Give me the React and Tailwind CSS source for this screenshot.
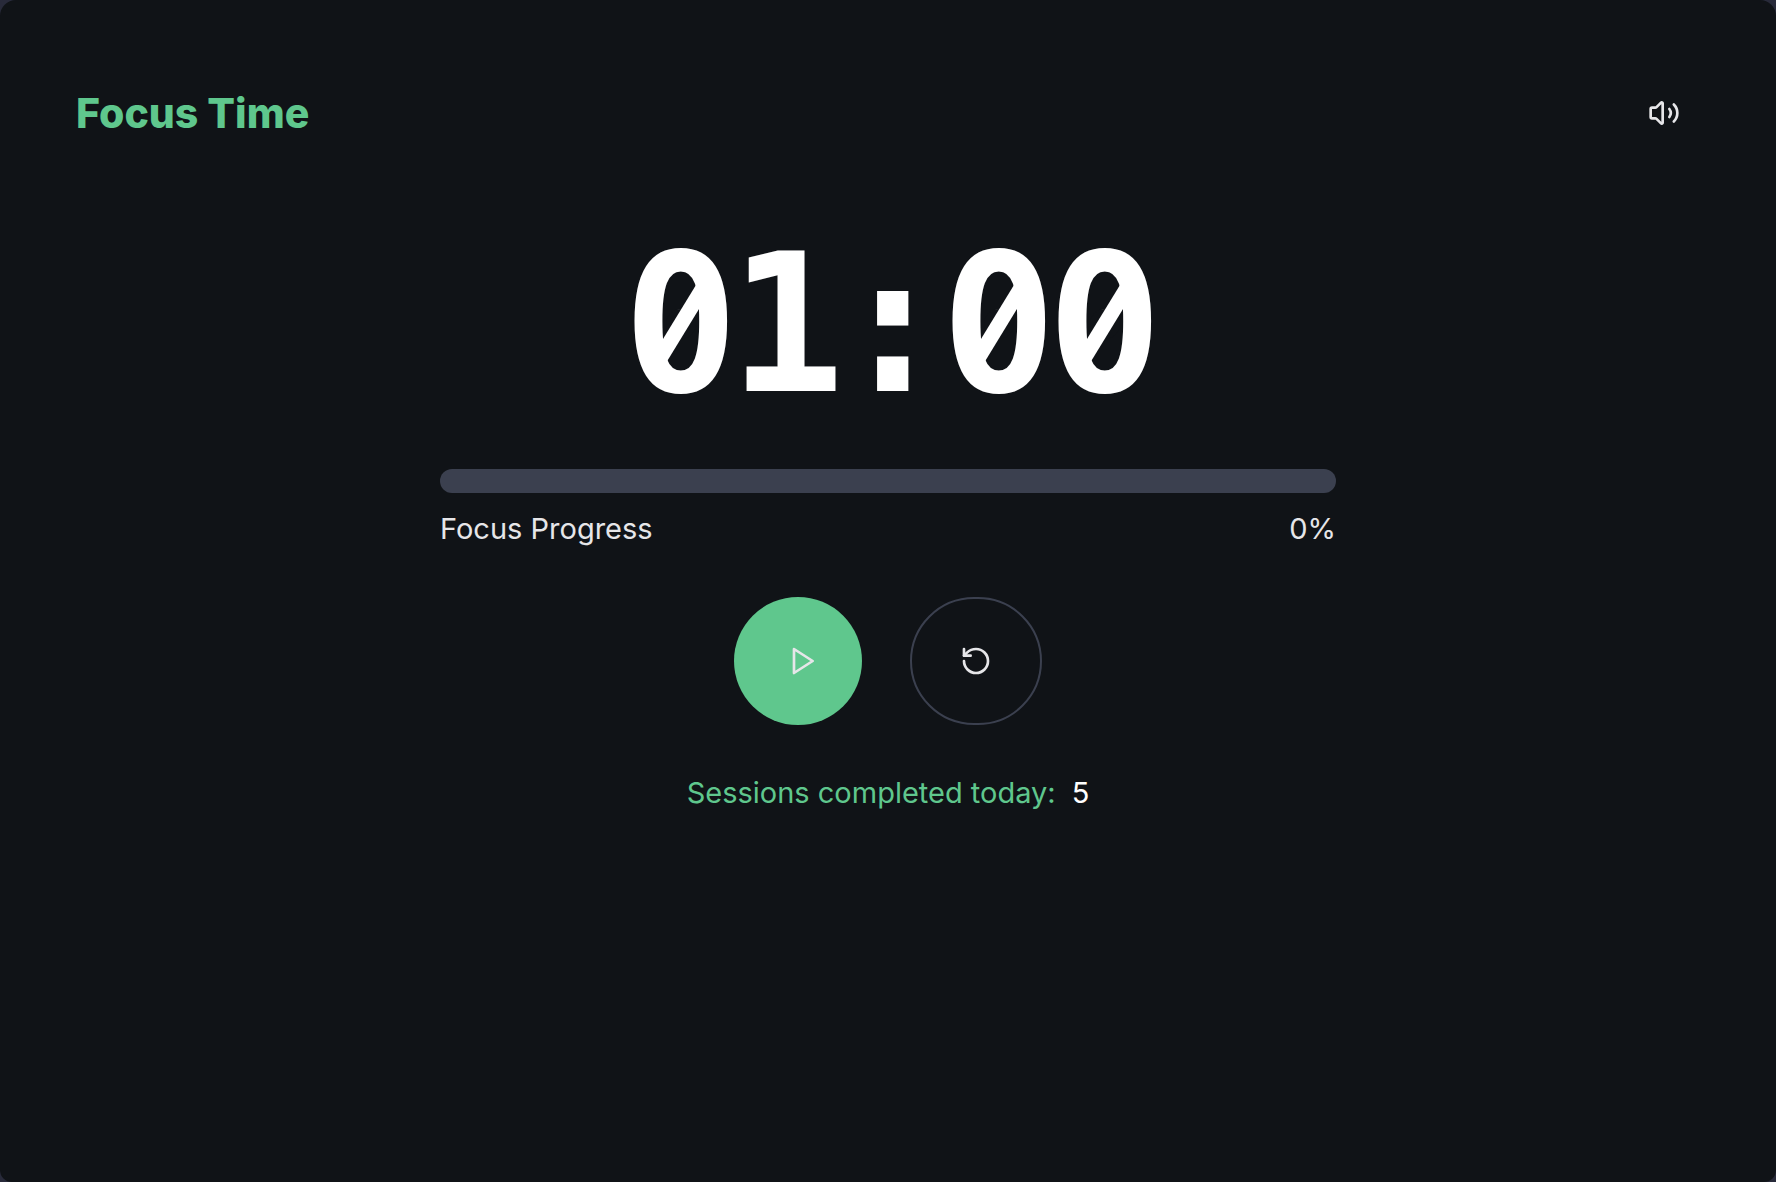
import { useState } from "react";

function Icon({ children, className = "" }) {
  return (
    <svg
      viewBox="0 0 24 24"
      aria-hidden="true"
      fill="none"
      stroke="currentColor"
      strokeWidth="2"
      strokeLinecap="round"
      strokeLinejoin="round"
      className={"size-8 " + className}
    >
      {children}
    </svg>
  );
}

// A zero whose centre dot is replaced by a diagonal bar.
function Zero() {
  return (
    <span className="relative inline-block">
      0
      <svg
        viewBox="-40 -50 80 100"
        aria-hidden="true"
        className="absolute top-[45px] left-[18px] h-[100px] w-20"
      >
        <circle r="15" className="fill-[#101317]" />
        <line x1="-22" y1="36" x2="22" y2="-36" stroke="currentColor" strokeWidth="15" />
      </svg>
    </span>
  );
}

export default function App() {
  const [progress] = useState(0);
  const time = "01:00";
  return (
    <div className="min-h-screen bg-[#282a3a] font-['Inter',sans-serif] text-[#e6e6e9]">
      <main className="flex min-h-screen flex-col rounded-t-2xl rounded-b-xl bg-[#101317] px-[76px] pt-[77px] pb-16">
        <header className="flex items-center justify-between">
          <h1 className="text-[41px] leading-[72px] font-extrabold text-[#5fc78d]">Focus Time</h1>
          <button type="button" aria-label="Mute sound" className="flex size-[72px] items-center justify-center rounded-xl">
            <Icon>
              <path d="M11 4.702a.705.705 0 0 0-1.203-.498L6.413 7.587A1.4 1.4 0 0 1 5.416 8H3a1 1 0 0 0-1 1v6a1 1 0 0 0 1 1h2.416a1.4 1.4 0 0 1 .997.413l3.383 3.384A.705.705 0 0 0 11 19.298z" />
              <path d="M16 9a5 5 0 0 1 0 6" />
              <path d="M19.364 18.364a9 9 0 0 0 0-12.728" />
            </Icon>
          </button>
        </header>

        <section className="mt-20 flex flex-col items-center">
          <time className="font-['DejaVu_Sans_Mono',monospace] text-[192px] leading-[192px] font-bold tracking-tighter whitespace-nowrap text-white">
            {time.split("").map((c, i) => (c === "0" ? <Zero key={i} /> : <span key={i}>{c}</span>))}
          </time>

          <div className="mt-12 w-full max-w-4xl">
            <div
              role="progressbar"
              aria-labelledby="progress-label"
              aria-valuenow={progress}
              aria-valuemin={0}
              aria-valuemax={100}
              className="h-6 overflow-hidden rounded-full bg-[#3b404f]"
            >
              <div className="h-full bg-[#5fc78d]" style={{ width: progress + "%" }} />
            </div>
            <div className="mt-4 flex justify-between text-[29px] leading-10">
              <span id="progress-label">Focus Progress</span>
              <span>{progress}%</span>
            </div>
          </div>

          <div className="mt-12 flex gap-12">
            <button type="button" aria-label="Start" className="flex h-32 w-32 items-center justify-center rounded-full bg-[#5fc78d]">
              <Icon className="ml-2">
                <polygon points="6 3 20 12 6 21 6 3" />
              </Icon>
            </button>
            <button type="button" aria-label="Reset" className="flex h-32 w-[132px] items-center justify-center rounded-full border-2 border-[#3b404f]">
              <Icon>
                <path d="M3 12a9 9 0 1 0 9-9 9.75 9.75 0 0 0-6.74 2.74L3 8" />
                <path d="M3 3v5h5" />
              </Icon>
            </button>
          </div>

          <p className="mt-12 flex gap-4 text-[29px] leading-10 text-[#5fc78d]">
            Sessions completed today:
            <span className="text-white">5</span>
          </p>
        </section>
      </main>
    </div>
  );
}
